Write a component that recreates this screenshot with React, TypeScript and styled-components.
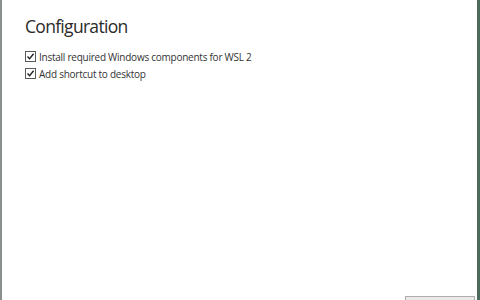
import React from 'react';
import styled, { createGlobalStyle } from 'styled-components';

const Global = createGlobalStyle`
  html, body {
    margin: 0;
    padding: 0;
    background: #ffffff;
  }
  body {
    font-family: 'Open Sans', 'Noto Sans', sans-serif;
    color: #333333;
  }
`;

const Frame = styled.div`
  display: flex;
  width: 480px;
  height: 300px;
  overflow: hidden;
`;

const LeftEdge = styled.div`
  width: 2px;
  background: #8a8f8c;
`;

const RightEdge = styled.div`
  width: 3px;
  background: #4c6b5c;
`;

const Page = styled.div`
  flex: 1;
  display: flex;
  flex-direction: column;
  background: #ffffff;
  padding: 14px 0 0 23px;
`;

const Title = styled.h1`
  margin: 0 0 10px;
  font-size: 17.5px;
  letter-spacing: -0.7px;
  line-height: 24px;
  font-weight: 400;
  color: #2b2b2b;
`;

const Row = styled.label`
  display: flex;
  align-items: center;
  gap: 3px;
  height: 17px;
  font-size: 10px;
  letter-spacing: -0.25px;
  color: #333333;
`;

const Box = styled.span`
  width: 9px;
  height: 9px;
  border: 1px solid #5a5a5a;
  display: flex;
  align-items: center;
  justify-content: center;
  background: #fff;
`;

const Footer = styled.div`
  margin-top: auto;
  display: flex;
  justify-content: flex-end;
  padding-right: 2px;
`;

const Button = styled.div`
  width: 68px;
  height: 3px;
  border: 1px solid #adadad;
  border-bottom: none;
  background: #e9e9e9;
`;

const Check = () => (
  <svg width="9" height="9" viewBox="0 0 9 9">
    <path d="M1.5 4.6 L3.6 6.8 L7.6 1.8" fill="none" stroke="#222" strokeWidth="1.4" />
  </svg>
);

const Option = ({ children }: { children: React.ReactNode }) => (
  <Row>
    <Box>
      <Check />
    </Box>
    {children}
  </Row>
);

export default function App(): JSX.Element {
  return (
    <>
      <Global />
      <Frame>
        <LeftEdge />
        <Page>
          <Title>Configuration</Title>
          <Option>Install required Windows components for WSL 2</Option>
          <Option>Add shortcut to desktop</Option>
          <Footer>
            <Button />
          </Footer>
        </Page>
        <RightEdge />
      </Frame>
    </>
  );
}
